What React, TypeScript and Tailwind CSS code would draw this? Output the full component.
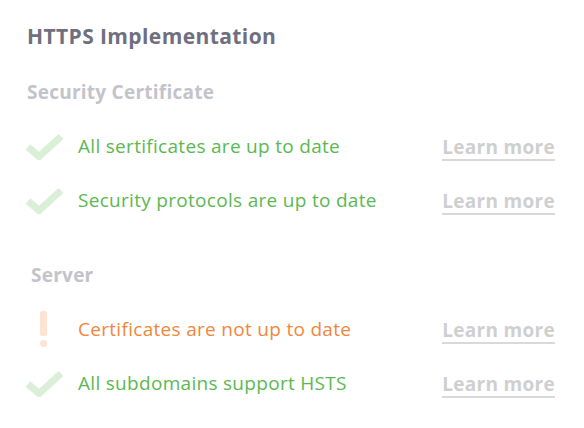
import React from 'react';

type Status = 'ok' | 'warn';

interface Check {
  label: string;
  status: Status;
}

const sections: { title: string; indent: string; items: Check[] }[] = [
  {
    title: 'Security Certificate',
    indent: 'pl-0',
    items: [
      { label: 'All sertificates are up to date', status: 'ok' },
      { label: 'Security protocols are up to date', status: 'ok' },
    ],
  },
  {
    title: 'Server',
    indent: 'pl-[4px]',
    items: [
      { label: 'Certificates are not up to date', status: 'warn' },
      { label: 'All subdomains support HSTS', status: 'ok' },
    ],
  },
];

const CheckMark = () => (
  <svg width="39" height="27" viewBox="0 0 39 27" fill="none">
    <polyline
      points="3,14 14,23.5 36,3.5"
      stroke="#d9efd6"
      strokeWidth="7"
      strokeLinejoin="miter"
    />
  </svg>
);

const Bang = () => (
  <div className="ml-[15px] flex flex-col items-center gap-[4px]">
    <div className="w-[7px] h-[25px] rounded-[2px] bg-[#fde3d1]" />
    <div className="w-[7px] h-[7px] rounded-full bg-[#fde3d1]" />
  </div>
);

const Row = ({ item }: { item: Check }) => (
  <div className="flex items-center h-[54px]">
    <div className="ml-[-2px] w-[53px] flex items-center">
      {item.status === 'ok' ? <CheckMark /> : <Bang />}
    </div>
    <span
      className={
        item.status === 'ok'
          ? 'flex-1 text-[19px] tracking-[0.3px] text-[#5cb852]'
          : 'flex-1 text-[19px] tracking-[0.3px] text-[#f0873c]'
      }
    >
      {item.label}
    </span>
    <a className="text-[19px] tracking-[0.3px] font-bold text-[#cfcfcf] border-b-2 border-[#d9d9d9] leading-[22px] pb-[1px] mt-[4px]">
      Learn more
    </a>
  </div>
);

export default function App() {
  return (
    <div
      className="w-[584px] h-[428px] bg-white pl-[27px] pr-[29px] pt-[24px]"
      style={{ fontFamily: '"Open Sans", "Noto Sans", sans-serif' }}
    >
      <h2 className="text-[21px] tracking-[0.4px] leading-[24px] font-bold text-[#6f6f7f]">
        HTTPS Implementation
      </h2>
      {sections.map((s, i) => (
        <div key={s.title} className={i === 0 ? 'mt-[32px]' : 'mt-[36px]'}>
          <h3
            className={`${s.indent} text-[19px] tracking-[0.25px] leading-[24px] font-bold text-[#c3c3cb] mb-[15px]`}
          >
            {s.title}
          </h3>
          {s.items.map((it) => (
            <Row key={it.label} item={it} />
          ))}
        </div>
      ))}
    </div>
  );
}
